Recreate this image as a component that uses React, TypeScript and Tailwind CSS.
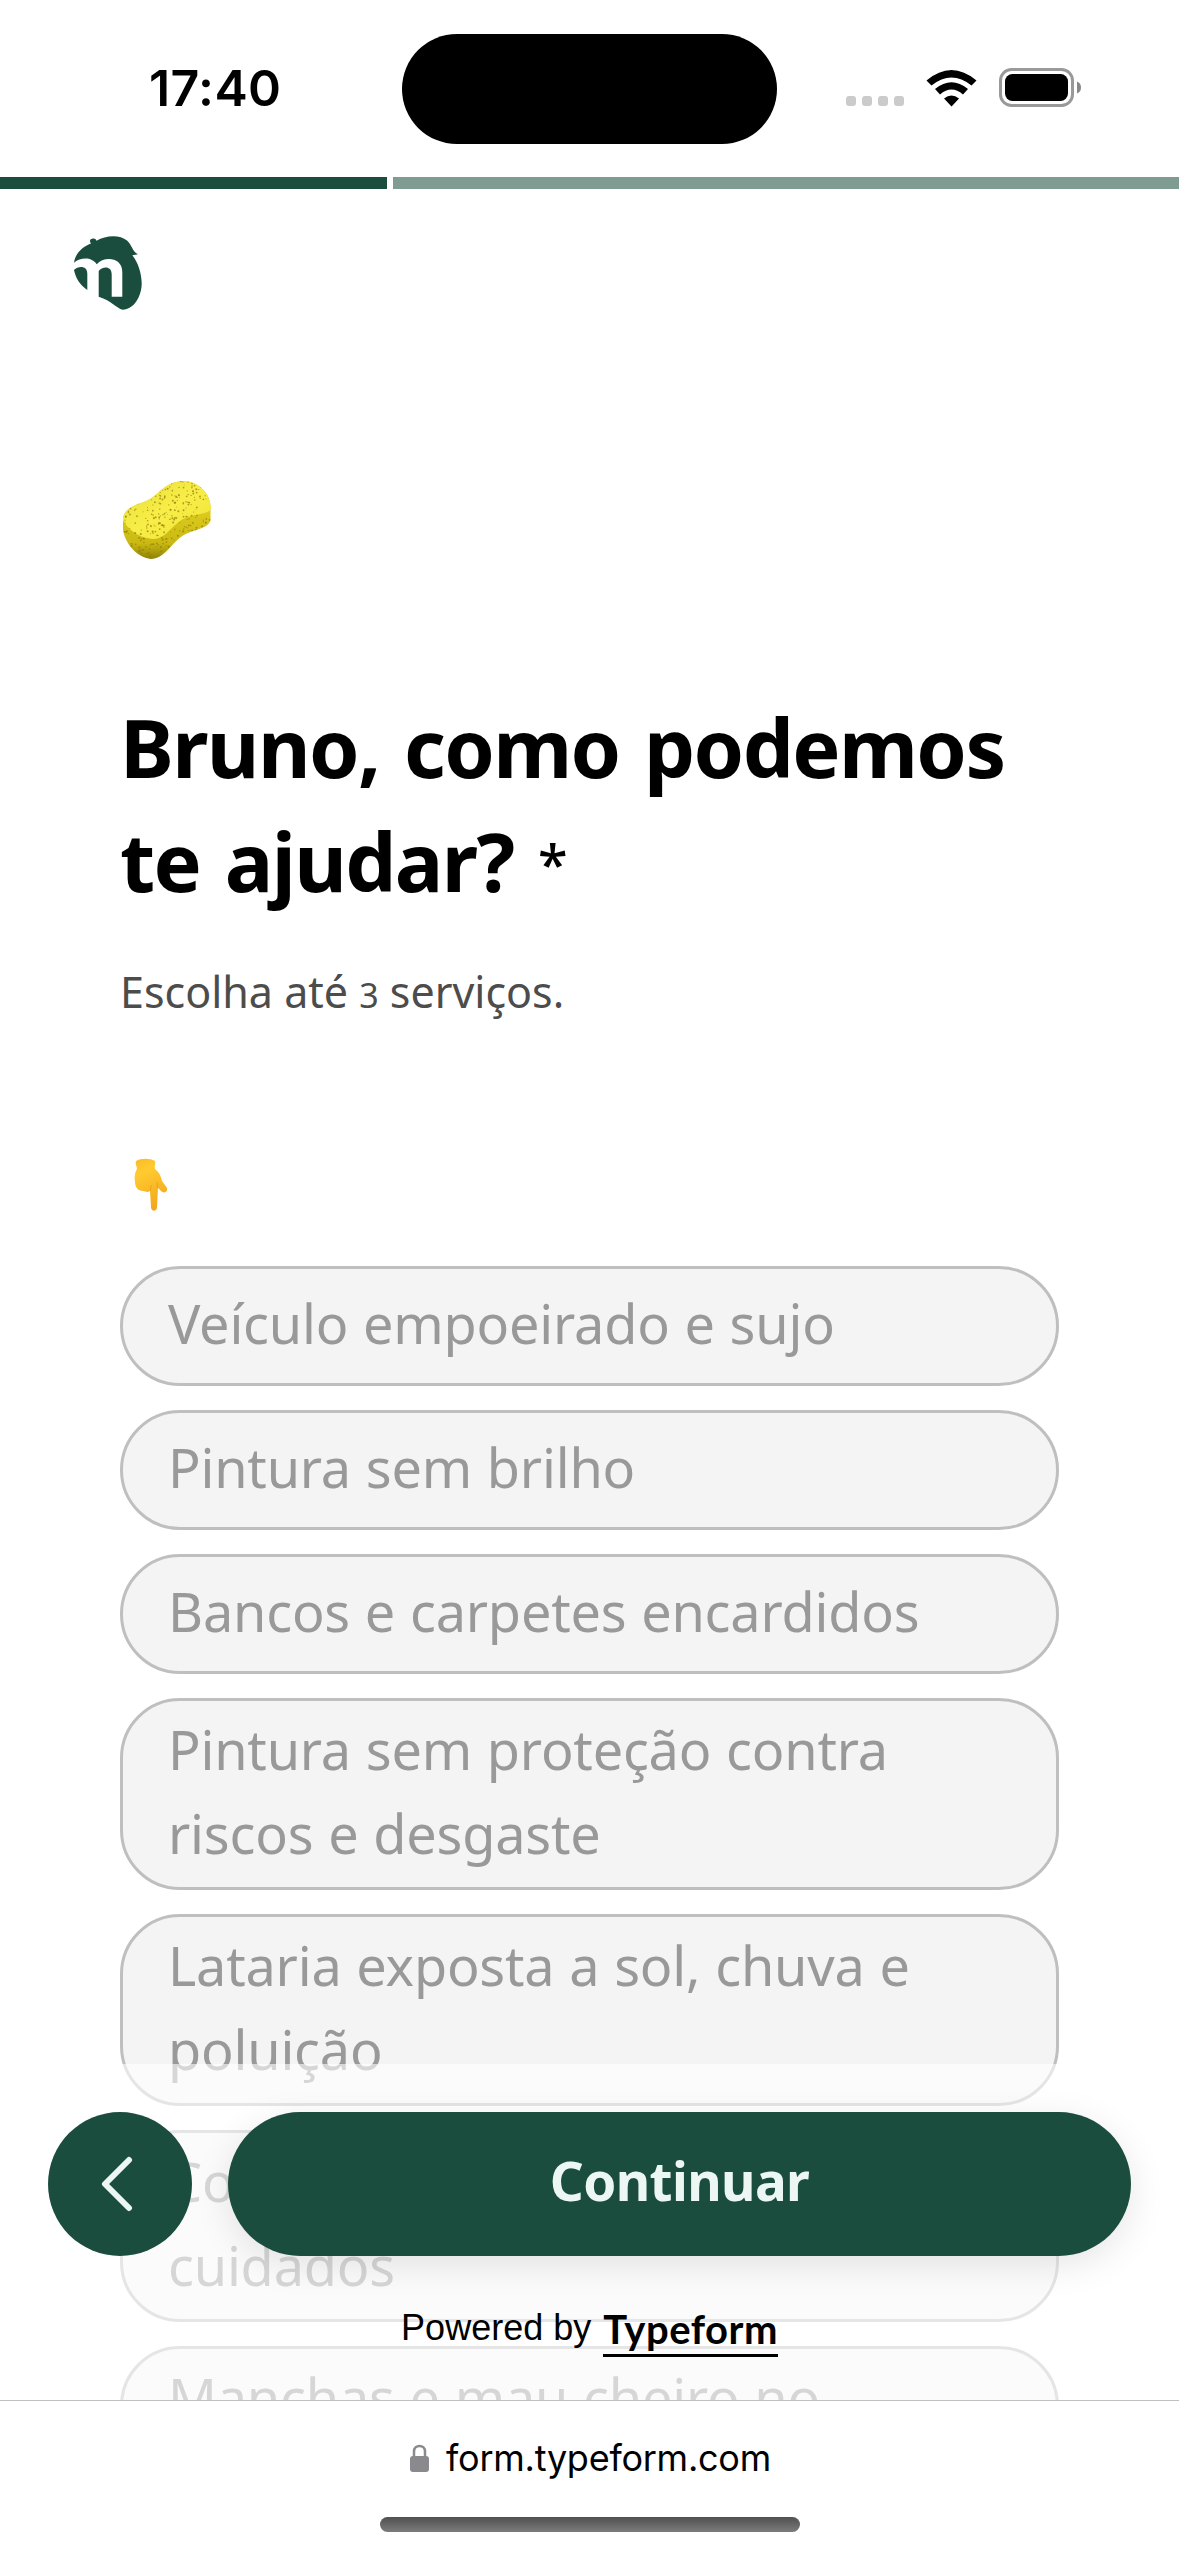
import { useState } from 'react';

const services = [
  'Veículo empoeirado e sujo',
  'Pintura sem brilho',
  'Bancos e carpetes encardidos',
  'Pintura sem proteção contra riscos e desgaste',
  'Lataria exposta a sol, chuva e poluição',
  'Couro ressecado e sem cuidados',
  'Manchas e mau cheiro no interior',
];

// pores on the sponge, scattered but stable between renders
const noise = (n: number) => {
  const v = Math.sin(n * 127.1) * 43758.5453;
  return v - Math.floor(v);
};

const pores = Array.from({ length: 330 }, (_, i) => ({
  x: noise(i + 1) * 88,
  y: noise(i + 501) * 77,
  r: 0.45 + noise(i + 901) * 0.6,
}));

function StatusBar() {
  return (
    <div className="flex h-[177px] shrink-0 items-start">
      <div className="w-[402px] pt-[58px] pl-[149px] font-['Inter'] text-[50px] leading-[60px] font-semibold tracking-[0.4px] text-black">
        17:40
      </div>
      <div className="mt-[34px] h-[110px] w-[375px] rounded-full bg-black" />
      <div className="flex flex-1 items-end pt-[68px] pl-[69px]">
        <div className="mb-[1px] flex gap-[6px]">
          {[0, 1, 2, 3].map((i) => (
            <div key={i} className="h-[10px] w-[10px] rounded-[3px] bg-[#cbcbcb]" />
          ))}
        </div>
        <svg className="ml-[22px] h-[38px] w-[51px]" viewBox="0 0 51 38">
          <path d="M0.5 11.5Q25.5 -9.5 50.5 11.5L45.5 16.5Q25.5 0.5 5.5 16.5Z" />
          <path d="M9 20Q25.5 6.5 42 20L37 25.5Q25.5 15.5 14 25.5Z" />
          <path d="M18 29.5Q25.5 23.5 33 29.5L25.5 37.5Z" />
        </svg>
        <svg className="ml-[22px] h-[39px] w-[83px]" viewBox="0 0 83 39">
          <rect x="1.5" y="1.5" width="72" height="36" rx="11" fill="none" stroke="#999" strokeWidth="3" />
          <rect x="6" y="6" width="63" height="27" rx="7.5" />
          <path d="M78 13.5Q82 15 82 19.5T78 25.5Z" fill="#888" />
        </svg>
      </div>
    </div>
  );
}

function Logo() {
  return (
    <svg className="h-[74px] w-[69px]" viewBox="0 0 69 74" fill="#1b4d3e">
      <path d="M0 26.7C1 18 8 11 17 7.5C14.5 4 17 2 20 2.5Q22 3 22.5 4.7C32 -1 46 -1.5 53 4.5C58 9 58 15 64 18.3L58.3 19.3C64 26 67.7 38 67.7 47.3C67.7 60 60 73.7 48.7 73.7C42 72 38 65 24.7 60.7V35C28 30.5 37.7 29 37.7 38.5V60.7H48.3V36C48.3 21 30 20 22.7 28.3C18 21 7 21 0 26.7Z" />
      <path d="M0 34C4 30 13.3 29 13.3 38V54C6 49 2 43 0 34Z" />
    </svg>
  );
}

function Sponge() {
  return (
    <svg className="h-[78px] w-[90px]" viewBox="0 0 88 77">
      <defs>
        <linearGradient id="side" x1="0" y1="0" x2="0" y2="1">
          <stop offset="0.4" stopColor="#dccb1c" />
          <stop offset="0.8" stopColor="#c9b912" />
          <stop offset="1" stopColor="#8f8208" />
        </linearGradient>
        <linearGradient id="top" x1="0" y1="0" x2="1" y2="1">
          <stop offset="0" stopColor="#e9dd38" />
          <stop offset="0.5" stopColor="#f7ee48" />
          <stop offset="1" stopColor="#efe233" />
        </linearGradient>
        <clipPath id="body">
          <path d="M0.5 38C1 27 12 24 23 20C37 14 40 1 60 0C76 0 88 14 87 27V39C84 48 70 47 58 55C48 62 41 77 28 77C14 76 0 59 0.5 45Z" />
        </clipPath>
      </defs>
      <g clipPath="url(#body)">
        <rect width="88" height="77" fill="url(#side)" />
        <path d="M0 38C1 25 12 22 23 19C35 15 40 1 60 0C75 0 88 12 88 28C80 35 67 31 55 41C46 48 40 59 28 57C14 55 5 47 0 38Z" fill="url(#top)" />
        {pores.map((p, i) => (
          <circle key={i} cx={p.x} cy={p.y} r={p.r} fill="#967a0a" opacity="0.7" />
        ))}
      </g>
    </svg>
  );
}

function PointingHand() {
  return (
    <svg className="h-[54px] w-[36px]" viewBox="0 0 36 54">
      <defs>
        <linearGradient id="hand" x1="0" y1="0" x2="0.3" y2="1">
          <stop offset="0" stopColor="#f9b92a" />
          <stop offset="0.3" stopColor="#ffcb2f" />
          <stop offset="1" stopColor="#f3a91f" />
        </linearGradient>
      </defs>
      <path
        d="M3 3C8 0 17 0 22 3C23 6 21 8 22 11C26 14 28 18 29 23L34 30C35 34 31 36 28 33L25 30L24 49C24 54 18 54 18 49L17 33C14 35 12 33 10 33C5 33 2 29 2 24C1 19 2 14 4 11C4 8 2 6 3 3Z"
        fill="url(#hand)"
      />
      <path d="M17.5 33L18 27M24.5 30L24 24" fill="none" stroke="#e89b1c" strokeWidth="0.8" />
    </svg>
  );
}

export default function App() {
  const [selected, setSelected] = useState<string[]>([]);

  const toggle = (service: string) => {
    if (selected.includes(service)) {
      setSelected(selected.filter((s) => s !== service));
    } else if (selected.length < 3) {
      setSelected([...selected, service]);
    }
  };

  return (
    <div className="relative flex h-[2556px] w-[1179px] flex-col overflow-hidden bg-white font-['Noto_Sans',sans-serif]">
      <StatusBar />

      {/* Progress */}
      <div className="flex h-3 shrink-0 gap-[6px]">
        <div className="w-[387px] bg-[#1b4d3e]" />
        <div className="flex-1 bg-[#809b91]" />
      </div>

      {/* Question */}
      <main className="h-[2211px] shrink-0 overflow-hidden px-[120px]">
        <div className="-ml-[46px] pt-[47px]">
          <Logo />
        </div>
        <div className="mt-[171px] ml-[2px]">
          <Sponge />
        </div>
        <h1 className="mt-[131px] h-[228px] text-[81px] leading-[114px] font-bold tracking-[-1.6px] [word-spacing:5px] whitespace-nowrap text-black">
          Bruno, como podemos
          <br />
          te ajudar? <span className="relative -top-[8px] text-[54px] leading-none font-medium">*</span>
        </h1>
        <p className="mt-[44px] h-[60px] text-[43px] leading-[60px] whitespace-nowrap text-[#4c4c4c]">
          Escolha até <span className="text-[34px] leading-none">3</span> serviços.
        </p>
        <div className="mt-[136px] ml-[13px] h-[54px]">
          <PointingHand />
        </div>

        <div className="mt-[54px] flex flex-col gap-6">
          {services.map((service) => (
            <button
              key={service}
              onClick={() => toggle(service)}
              className="flex min-h-[120px] shrink-0 items-center rounded-[60px] border-[3px] border-[#bfbfbf] bg-[#f4f4f4] px-[45px] pt-[6px] pb-3 text-left text-[54px] leading-[84px] tracking-[-0.2px] [word-spacing:1px] text-[#999999]"
            >
              <span className="w-[800px]">{service}</span>
            </button>
          ))}
        </div>
      </main>

      {/* Sticky footer over the list */}
      <div className="absolute inset-x-0 top-[2064px] flex h-[336px] flex-col bg-white/60 px-12 pt-12">
        <div className="flex gap-9">
          <button className="flex h-36 w-36 items-center justify-center rounded-full bg-[#1b4d3e]">
            <svg className="h-[56px] w-[32px] -translate-x-[3px]" viewBox="0 0 32 56" fill="none">
              <path d="M28 4L4 28L28 52" stroke="#ecf7f4" strokeWidth="6" strokeLinecap="round" strokeLinejoin="round" />
            </svg>
          </button>
          <button className="h-36 w-[903px] rounded-full bg-[#1b4d3e] pb-[6px] text-[53px] font-bold tracking-[-0.6px] text-[#ecf7f4] shadow-[0_9px_36px_rgba(0,0,0,0.1)]">
            Continuar
          </button>
        </div>
        <div className="mt-[47px] flex items-start justify-center gap-3 text-black">
          <span className="pt-[3px] font-['Liberation_Sans',sans-serif] text-[36px] leading-[44px]">Powered by</span>
          <span className="h-[54px] border-b-[3px] border-black font-['Lato',sans-serif] text-[40px] leading-[52px] font-bold tracking-[0.5px]">
            Typeform
          </span>
        </div>
      </div>

      {/* Browser bar */}
      <div className="relative flex h-[156px] shrink-0 flex-col items-center border-t border-[#c0c0c0] bg-white">
        <div className="mt-[32px] flex h-[50px] items-center gap-[17px]">
          <svg className="h-[28px] w-[19px]" viewBox="0 0 19 28">
            <path d="M4 14V7.5C4 0 15 0 15 7.5V14" fill="none" stroke="#8a8a8e" strokeWidth="2.5" />
            <rect y="12" width="19" height="16" rx="3" fill="#8a8a8e" />
          </svg>
          <span className="-mr-[2px] font-['Inter',sans-serif] text-[36px] leading-[50px] tracking-[-0.25px] text-black">
            form.typeform.com
          </span>
        </div>
        <div className="mt-[34px] h-[15px] w-[420px] rounded-full bg-linear-to-b from-[#505050] to-[#7c7c7c]" />
      </div>
    </div>
  );
}
